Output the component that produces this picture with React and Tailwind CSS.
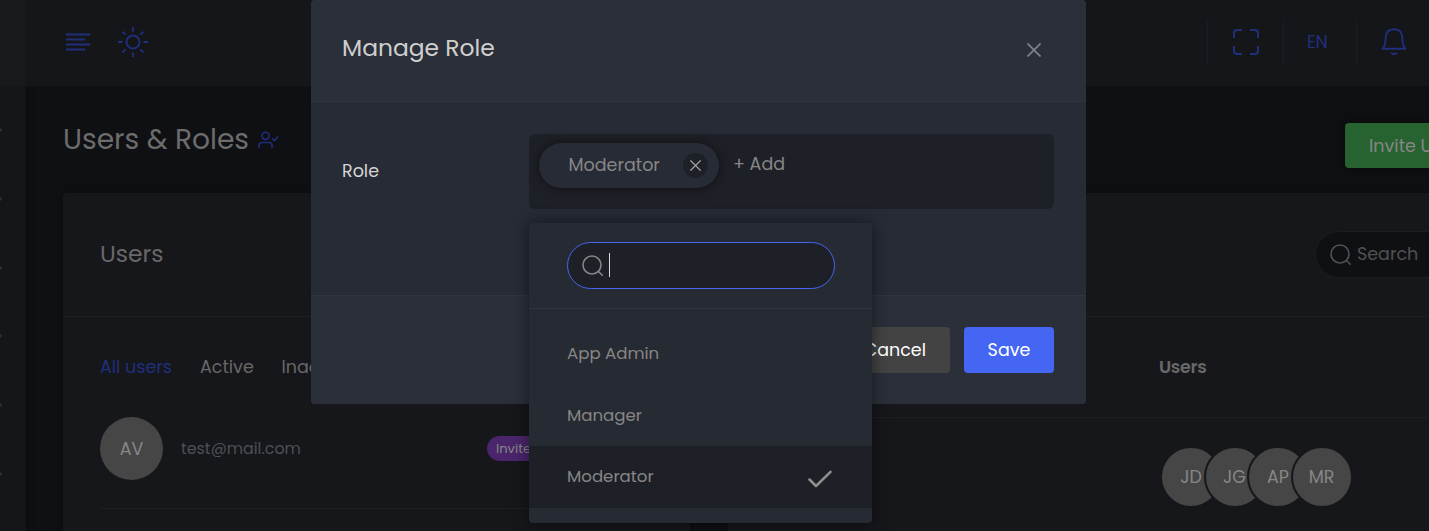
import React from "react";

function SearchIcon({ className }) {
  return (
    <svg className={className} width="22" height="22" viewBox="0 0 22 22" fill="none" stroke="currentColor" strokeWidth="1.6" strokeLinecap="round">
      <circle cx="10" cy="10" r="9" />
      <path d="M16.5 16.5L20.3 20.3" />
    </svg>
  );
}

function CloseIcon({ size, className }) {
  return (
    <svg className={className} width={size} height={size} viewBox="0 0 14 14" fill="none" stroke="currentColor" strokeWidth="1.6">
      <path d="M0.5 0.5L13.5 13.5M13.5 0.5L0.5 13.5" />
    </svg>
  );
}

function Sidebar() {
  return (
    <aside className="relative z-10 flex w-[26px] shrink-0 flex-col bg-[#141619] shadow-[0_0_10px_rgba(0,0,0,0.35)]">
      <div className="h-[86px] shrink-0 bg-[#17191d]" />
      <div className="flex flex-col gap-[60.75px] pt-10">
        {[0, 1, 2, 3, 4, 5].map((i) => (
          <svg key={i} className="-ml-0.5 block shrink-0" width="4" height="8" viewBox="0 0 4 8" fill="none" stroke="#303235" strokeWidth="1.4">
            <path d="M0.4 1L3.3 4L0.4 7" />
          </svg>
        ))}
      </div>
    </aside>
  );
}

function TopBar() {
  return (
    <header className="z-[11] flex h-[86px] shrink-0 justify-between bg-[#141619] text-[#202f7c]">
      <div className="flex pl-[39px] pt-[26px]">
        <svg className="mt-[7px]" width="26" height="19" viewBox="0 0 26 19" stroke="currentColor" strokeWidth="2">
          <path d="M1 1.5H25M1 6.5H20M1 11.5H25M1 16.5H20" />
        </svg>
        <svg className="ml-[27px]" width="31" height="32" viewBox="0 0 31 32" fill="none" stroke="currentColor" strokeWidth="1.9">
          <circle cx="15" cy="16" r="6.5" />
          <path d="M15 1V5.5M15 26.5V31M0 16H4.5M25.5 16H30M4.6 5.6L7.6 8.6M22.4 23.4L25.4 26.4M4.6 26.4L7.6 23.4M22.4 8.6L25.4 5.6" />
        </svg>
      </div>
      <div className="flex w-[222px] pt-5">
        <div className="flex h-11 w-[76px] shrink-0 justify-center border-l border-[#1b1d23] pt-[9px]">
          <svg width="26" height="26" viewBox="0 0 26 26" fill="none" stroke="currentColor" strokeWidth="2">
            <path d="M1 9V4Q1 1 4 1H9M17 1H22Q25 1 25 4V9M25 17V22Q25 25 22 25H17M9 25H4Q1 25 1 22V17" />
          </svg>
        </div>
        <div className="flex h-11 w-[73px] shrink-0 items-center border-l border-[#1b1d23] pl-[23px] text-[17.5px] tracking-[-0.4px]">EN</div>
        <div className="flex h-11 w-[73px] shrink-0 border-l border-[#1b1d23] pl-6 pt-2">
          <svg width="26" height="28" viewBox="0 0 26 28" fill="none" stroke="currentColor" strokeWidth="1.9" strokeLinejoin="round">
            <path d="M1.5 20.7H24.5Q21.4 18 21.4 10.5Q21.4 1.2 13 1.2T4.6 10.5Q4.6 18 1.5 20.7Z" />
            <path d="M10.2 24.6Q13 27.8 15.8 24.6" />
          </svg>
        </div>
      </div>
    </header>
  );
}

function UsersCard() {
  return (
    <section className="flex w-[627px] shrink-0 flex-col rounded-t bg-[#16171b] shadow-[0_0_8px_rgba(0,0,0,0.3)]">
      <div className="flex h-[124px] shrink-0 items-center border-b border-[#1c1e22] pb-0.5 pl-[37px] text-[23.4px] text-[#686868]">Users</div>
      <div className="flex h-[100px] shrink-0 items-center px-[37px] pt-px text-[17.5px]">
        <span className="w-[100px] shrink-0 text-[#202f7c]">All users</span>
        <span className="w-[81.5px] shrink-0 text-[#686868]">Active</span>
        <span className="text-[#686868]">Inactive</span>
      </div>
      <div className="mx-[37px] flex h-[92px] shrink-0 border-b border-[#1c1e22]">
        <div className="flex size-[63px] shrink-0 items-center justify-center rounded-full bg-[#464646] pt-px text-[17.5px] text-[#868686]">AV</div>
        <div className="ml-[18px] w-[306px] shrink-0 pt-[20px] text-[15.85px] leading-6 text-[#4d4f55]">test@mail.com</div>
        <div className="mt-[19px] flex h-[25px] items-center rounded-full bg-[#4a256b] px-[9px] text-[13.1px] text-[#858585]">Invited</div>
      </div>
    </section>
  );
}

function RolesCard() {
  return (
    <section className="ml-[38px] flex grow flex-col bg-[#16171b] shadow-[0_0_8px_rgba(0,0,0,0.3)]">
      <div className="flex h-[124px] shrink-0 items-center justify-end border-b border-[#1c1e22]">
        <div className="flex h-[47px] w-[114px] items-center overflow-hidden rounded-l-full border border-r-0 border-[#1b1d21] bg-[#0f1013] pl-3.5 text-[#505153]">
          <SearchIcon className="shrink-0" />
          <span className="ml-[5px] text-[17.5px]">Search</span>
        </div>
      </div>
      <div className="flex h-[101px] shrink-0 items-center border-b border-[#1c1e22] pl-[431px] pt-px text-[17.5px] font-semibold tracking-[-0.35px] text-[#686868]">Users</div>
      <div className="flex pl-[432px] pt-7">
        {["JD", "JG", "AP", "MR"].map((name) => (
          <div key={name} className="-mr-[18.5px] flex size-[62px] shrink-0 items-center justify-center rounded-full border-2 border-[#16171b] bg-[#464646] text-[17.5px] text-[#868686]">
            {name}
          </div>
        ))}
      </div>
    </section>
  );
}

function RoleMenu() {
  return (
    <div className="absolute left-[218px] top-[223px] flex h-[300px] w-[343px] flex-col overflow-hidden rounded bg-[#262a32] text-[16.6px] text-[#868686] shadow-[0_0_16px_rgba(0,0,0,0.5)]">
      <div className="h-[86px] shrink-0 border-b border-[#303541] px-[38px] pt-[19px]">
        <div className="flex h-[47px] w-[268px] items-center rounded-full border border-[#4466f2] bg-[#1e2027] pl-3.5">
          <SearchIcon />
          <div className="-mt-px ml-[5px] h-6 w-px bg-[#d8d8d8]" />
        </div>
      </div>
      <div className="mt-[13px] flex h-[62px] shrink-0 items-center pl-[38px] pt-0.5">App Admin</div>
      <div className="flex h-[62px] shrink-0 items-center pl-[38px] pt-0.5">Manager</div>
      <div className="flex h-[62px] shrink-0 items-center justify-between bg-[#1e2027] pl-[38px] pr-10">
        Moderator
        <svg className="mt-1" width="24" height="18" viewBox="0 0 24 18" fill="none" stroke="#909090" strokeWidth="2.5" strokeLinecap="round" strokeLinejoin="round">
          <path d="M1.5 9.5L8 16L22.5 1.8" />
        </svg>
      </div>
    </div>
  );
}

function RoleModal() {
  return (
    <div className="absolute left-[311px] top-0 z-20 flex h-[404px] w-[775px] flex-col rounded bg-[#272b35]">
      <div className="flex h-[102px] shrink-0 items-center justify-between rounded-t border-b border-[#303541] bg-[#2b2f39] pb-[5px] pl-[31px] pr-[45px] text-[23.4px] text-[#cfcfcf]">
        Manage Role
        <CloseIcon size={14} className="mt-[3px] text-[#80838a]" />
      </div>
      <div className="flex grow pl-[31px] pt-8">
        <div className="w-[187px] pt-[25px] text-[17.5px] leading-6 text-[#d4d4d4]">Role</div>
        <div className="flex h-[75px] w-[525px] rounded-md bg-[#1e2027] pl-2.5 pt-[9px] text-[17.5px] text-[#868686]">
          <div className="flex h-[45px] w-[180px] items-center justify-between rounded-full bg-[#272b35] pl-[29.5px] pr-[11px] shadow-[0_0_12px_rgba(0,0,0,0.5)]">
            <span>Moderator</span>
            <span className="flex size-[25px] items-center justify-center rounded-full bg-[#1e2027] text-[#a0a0a0]">
              <CloseIcon size={11} />
            </span>
          </div>
          <span className="ml-[14px] pt-[9px] leading-6">+ Add</span>
        </div>
      </div>
      <div className="flex h-[109px] shrink-0 justify-end rounded-b border-t border-[#303541] bg-[#2b2f39] pr-8 pt-[31px] text-[17.5px] text-white">
        <button className="mr-3.5 h-[46px] rounded bg-[#434343] px-6 pt-px">Cancel</button>
        <button className="h-[46px] w-[90px] rounded bg-[#4466f2] pt-px">Save</button>
      </div>
      <RoleMenu />
    </div>
  );
}

export default function App() {
  return (
    <div className="relative flex h-[531px] w-full overflow-hidden whitespace-nowrap bg-[#0f1013] font-[Poppins,Inter,sans-serif]">
      <Sidebar />
      <div className="flex min-w-0 grow flex-col">
        <TopBar />
        <main className="flex grow flex-col pl-[37px]">
          <div className="flex h-[107px] shrink-0 items-center justify-between">
            <div className="flex items-center">
              <h1 className="text-[28.1px] text-[#6c6c6c]">Users &amp; Roles</h1>
              <svg className="ml-[9px] mt-0.5" width="21" height="18" viewBox="0 0 21 18" fill="none" stroke="#202f7c" strokeWidth="1.6" strokeLinecap="round" strokeLinejoin="round">
                <circle cx="7.5" cy="4.8" r="3.6" />
                <path d="M1 16.5V14.5Q1 11.5 4 11.5H11Q14 11.5 14 14.5V16.5M14.5 7.8L16.2 9.6L19.8 6" />
              </svg>
            </div>
            <div className="mt-3 flex h-[45px] w-[84px] items-center overflow-hidden rounded-l bg-[#266330] pl-6 pt-px text-[17.5px] text-[#868686] shadow-[0_0_10px_rgba(0,0,0,0.6)]">Invite Users</div>
          </div>
          <div className="flex grow">
            <UsersCard />
            <RolesCard />
          </div>
        </main>
      </div>
      <RoleModal />
    </div>
  );
}
